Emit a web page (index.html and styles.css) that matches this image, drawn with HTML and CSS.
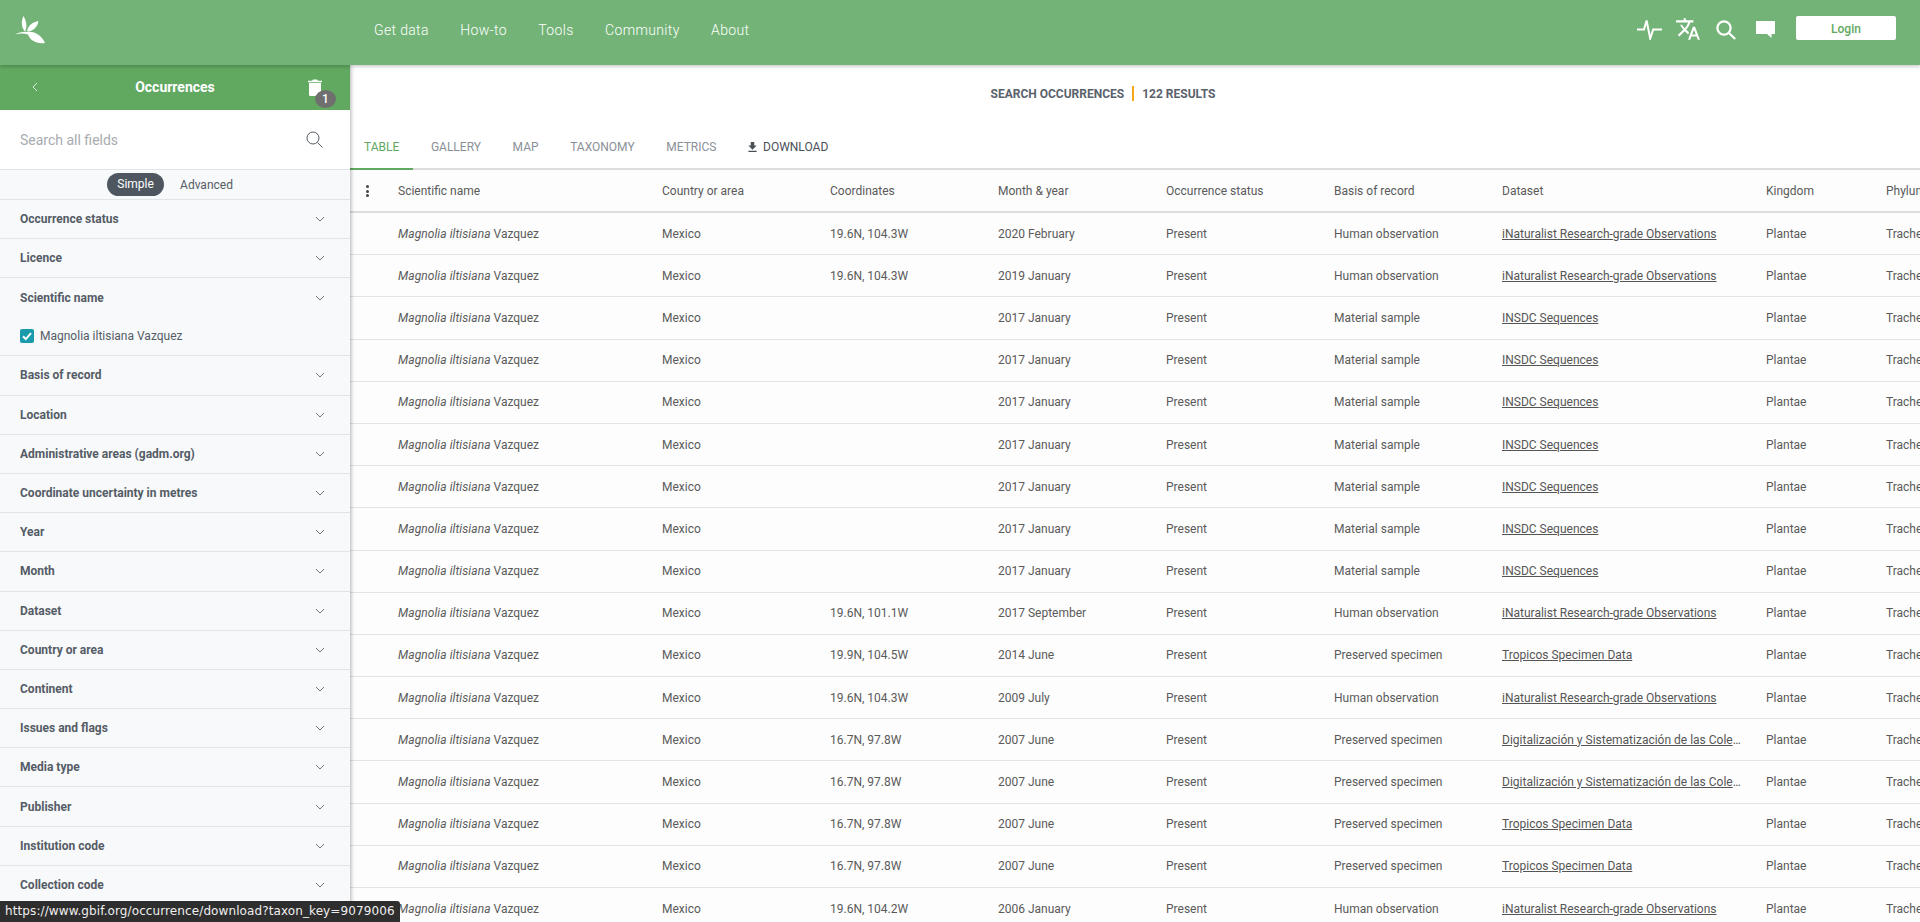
FILE: index.html
```html
<!DOCTYPE html>
<html lang="en">
<head>
<meta charset="utf-8">
<title>Occurrences</title>
<link rel="stylesheet" href="styles.css">
</head>
<body>
<header class="topbar">
  <svg class="logo" viewBox="15 16 31 28" aria-label="GBIF"><path d="M23.500 16C21 21 21 27 25 31.500 27.500 27 26.500 21 23.500 16Z"/><path d="M38.500 21C33 22 28 25 27 31.500 33 31.500 37.500 27 38.500 21Z"/><path d="M15 34.500C19 32.500 23 31.500 27 32 35 31 41 35 45 43 38 44 30.500 41.500 28 34.500 24 33.200 20 33.200 15 34.500Z"/></svg>
  <nav class="mainnav"><a>Get data</a><a>How-to</a><a>Tools</a><a>Community</a><a>About</a></nav>
  <div class="actions">
    <svg class="ic ic-pulse" viewBox="0 0 25 21"><path d="M0 10.500h7l2.600-9 3.600 18 3-9h9"/></svg>
    <svg class="ic-fill ic-translate" viewBox="0 0 24 24"><path d="M12.870 15.070l-2.540-2.510.03-.03c1.740-1.940 2.980-4.170 3.710-6.530H17V4h-7V2H8v2H1v1.990h11.170C11.500 7.920 10.440 9.750 9 11.350 8.070 10.320 7.300 9.190 6.690 8h-2c.73 1.630 1.730 3.170 2.980 4.560l-5.090 5.020L4 19l5-5 3.110 3.110.76-2.040zM18.500 10h-2L12 22h2l1.120-3h4.750L21 22h2l-4.500-12zm-2.620 7l1.620-4.330L19.120 17h-3.240z"/></svg>
    <svg class="ic ic-search" viewBox="0 0 20 20"><circle cx="8" cy="8" r="6.600"/><path d="M13 13l6.200 6"/></svg>
    <svg class="ic-fill ic-chat" viewBox="0 0 19 18"><path d="M0 1h19v13h-3.500v4L11 14H0z"/></svg>
    <button class="login">Login</button>
  </div>
</header>
<div class="layout">
  <aside class="sidebar">
    <div class="side-head">
      <svg class="back" viewBox="0 0 6 10"><path d="M5 1L1 5l4 4"/></svg>
      <span class="side-title">Occurrences</span>
      <span class="trash">
        <svg viewBox="0 0 14 17"><path d="M1 4h12v11.400c0 .9-.7 1.600-1.600 1.600H2.600C1.700 17 1 16.300 1 15.400zM0 1.800h4L5 .6h4l1 1.200h4V3.300H0z"/></svg>
        <b class="badge">1</b>
      </span>
    </div>
    <div class="side-search">
      <span class="placeholder">Search all fields</span>
      <svg class="search-ic" viewBox="0 0 17 17"><circle cx="7" cy="7" r="6"/><path d="M11.500 11.500l5 5"/></svg>
    </div>
    <div class="toggle"><span class="pill">Simple</span><span class="adv">Advanced</span></div>
    <div class="filter"><span>Occurrence status</span><svg viewBox="0 0 10 6"><path d="M1 1l4 4 4-4"/></svg></div>
    <div class="filter"><span>Licence</span><svg viewBox="0 0 10 6"><path d="M1 1l4 4 4-4"/></svg></div>
    <div class="filter open">
      <div class="filter-top"><span>Scientific name</span><svg viewBox="0 0 10 6"><path d="M1 1l4 4 4-4"/></svg></div>
      <div class="check"><i class="box"><svg viewBox="0 0 14 14"><path d="M3 7.300l2.800 2.800L11 4.200"/></svg></i>Magnolia iltisiana Vazquez</div>
    </div>
    <div class="filter"><span>Basis of record</span><svg viewBox="0 0 10 6"><path d="M1 1l4 4 4-4"/></svg></div>
    <div class="filter"><span>Location</span><svg viewBox="0 0 10 6"><path d="M1 1l4 4 4-4"/></svg></div>
    <div class="filter"><span>Administrative areas (gadm.org)</span><svg viewBox="0 0 10 6"><path d="M1 1l4 4 4-4"/></svg></div>
    <div class="filter"><span>Coordinate uncertainty in metres</span><svg viewBox="0 0 10 6"><path d="M1 1l4 4 4-4"/></svg></div>
    <div class="filter"><span>Year</span><svg viewBox="0 0 10 6"><path d="M1 1l4 4 4-4"/></svg></div>
    <div class="filter"><span>Month</span><svg viewBox="0 0 10 6"><path d="M1 1l4 4 4-4"/></svg></div>
    <div class="filter"><span>Dataset</span><svg viewBox="0 0 10 6"><path d="M1 1l4 4 4-4"/></svg></div>
    <div class="filter"><span>Country or area</span><svg viewBox="0 0 10 6"><path d="M1 1l4 4 4-4"/></svg></div>
    <div class="filter"><span>Continent</span><svg viewBox="0 0 10 6"><path d="M1 1l4 4 4-4"/></svg></div>
    <div class="filter"><span>Issues and flags</span><svg viewBox="0 0 10 6"><path d="M1 1l4 4 4-4"/></svg></div>
    <div class="filter"><span>Media type</span><svg viewBox="0 0 10 6"><path d="M1 1l4 4 4-4"/></svg></div>
    <div class="filter"><span>Publisher</span><svg viewBox="0 0 10 6"><path d="M1 1l4 4 4-4"/></svg></div>
    <div class="filter"><span>Institution code</span><svg viewBox="0 0 10 6"><path d="M1 1l4 4 4-4"/></svg></div>
    <div class="filter"><span>Collection code</span><svg viewBox="0 0 10 6"><path d="M1 1l4 4 4-4"/></svg></div>
  </aside>
  <main class="content">
    <div class="summary"><b>SEARCH OCCURRENCES</b><i class="sep"></i><b>122 RESULTS</b></div>
    <div class="tabs">
      <a class="tab active">TABLE</a><a class="tab">GALLERY</a><a class="tab">MAP</a><a class="tab">TAXONOMY</a><a class="tab">METRICS</a>
      <a class="tab dl"><svg viewBox="5 3 14 17"><path d="M19 9h-4V3H9v6H5l7 7 7-7zM5 18v2h14v-2H5z"/></svg>DOWNLOAD</a>
    </div>
    <div class="table">
      <div class="row head"><span class="dots"><i></i><i></i><i></i></span><span>Scientific name</span><span>Country or area</span><span>Coordinates</span><span>Month &amp; year</span><span>Occurrence status</span><span>Basis of record</span><span>Dataset</span><span>Kingdom</span><span>Phylum</span></div>
      <div class="row"><span></span><span><em>Magnolia iltisiana</em> Vazquez</span><span>Mexico</span><span>19.6N, 104.3W</span><span>2020 February</span><span>Present</span><span>Human observation</span><span><a>iNaturalist Research-grade Observations</a></span><span>Plantae</span><span>Tracheophyta</span></div>
      <div class="row"><span></span><span><em>Magnolia iltisiana</em> Vazquez</span><span>Mexico</span><span>19.6N, 104.3W</span><span>2019 January</span><span>Present</span><span>Human observation</span><span><a>iNaturalist Research-grade Observations</a></span><span>Plantae</span><span>Tracheophyta</span></div>
      <div class="row"><span></span><span><em>Magnolia iltisiana</em> Vazquez</span><span>Mexico</span><span></span><span>2017 January</span><span>Present</span><span>Material sample</span><span><a>INSDC Sequences</a></span><span>Plantae</span><span>Tracheophyta</span></div>
      <div class="row"><span></span><span><em>Magnolia iltisiana</em> Vazquez</span><span>Mexico</span><span></span><span>2017 January</span><span>Present</span><span>Material sample</span><span><a>INSDC Sequences</a></span><span>Plantae</span><span>Tracheophyta</span></div>
      <div class="row"><span></span><span><em>Magnolia iltisiana</em> Vazquez</span><span>Mexico</span><span></span><span>2017 January</span><span>Present</span><span>Material sample</span><span><a>INSDC Sequences</a></span><span>Plantae</span><span>Tracheophyta</span></div>
      <div class="row"><span></span><span><em>Magnolia iltisiana</em> Vazquez</span><span>Mexico</span><span></span><span>2017 January</span><span>Present</span><span>Material sample</span><span><a>INSDC Sequences</a></span><span>Plantae</span><span>Tracheophyta</span></div>
      <div class="row"><span></span><span><em>Magnolia iltisiana</em> Vazquez</span><span>Mexico</span><span></span><span>2017 January</span><span>Present</span><span>Material sample</span><span><a>INSDC Sequences</a></span><span>Plantae</span><span>Tracheophyta</span></div>
      <div class="row"><span></span><span><em>Magnolia iltisiana</em> Vazquez</span><span>Mexico</span><span></span><span>2017 January</span><span>Present</span><span>Material sample</span><span><a>INSDC Sequences</a></span><span>Plantae</span><span>Tracheophyta</span></div>
      <div class="row"><span></span><span><em>Magnolia iltisiana</em> Vazquez</span><span>Mexico</span><span></span><span>2017 January</span><span>Present</span><span>Material sample</span><span><a>INSDC Sequences</a></span><span>Plantae</span><span>Tracheophyta</span></div>
      <div class="row"><span></span><span><em>Magnolia iltisiana</em> Vazquez</span><span>Mexico</span><span>19.6N, 101.1W</span><span>2017 September</span><span>Present</span><span>Human observation</span><span><a>iNaturalist Research-grade Observations</a></span><span>Plantae</span><span>Tracheophyta</span></div>
      <div class="row"><span></span><span><em>Magnolia iltisiana</em> Vazquez</span><span>Mexico</span><span>19.9N, 104.5W</span><span>2014 June</span><span>Present</span><span>Preserved specimen</span><span><a>Tropicos Specimen Data</a></span><span>Plantae</span><span>Tracheophyta</span></div>
      <div class="row"><span></span><span><em>Magnolia iltisiana</em> Vazquez</span><span>Mexico</span><span>19.6N, 104.3W</span><span>2009 July</span><span>Present</span><span>Human observation</span><span><a>iNaturalist Research-grade Observations</a></span><span>Plantae</span><span>Tracheophyta</span></div>
      <div class="row"><span></span><span><em>Magnolia iltisiana</em> Vazquez</span><span>Mexico</span><span>16.7N, 97.8W</span><span>2007 June</span><span>Present</span><span>Preserved specimen</span><span class="clip"><a>Digitalización y Sistematización de las Colecciones Biológicas</a></span><span>Plantae</span><span>Tracheophyta</span></div>
      <div class="row"><span></span><span><em>Magnolia iltisiana</em> Vazquez</span><span>Mexico</span><span>16.7N, 97.8W</span><span>2007 June</span><span>Present</span><span>Preserved specimen</span><span class="clip"><a>Digitalización y Sistematización de las Colecciones Biológicas</a></span><span>Plantae</span><span>Tracheophyta</span></div>
      <div class="row"><span></span><span><em>Magnolia iltisiana</em> Vazquez</span><span>Mexico</span><span>16.7N, 97.8W</span><span>2007 June</span><span>Present</span><span>Preserved specimen</span><span><a>Tropicos Specimen Data</a></span><span>Plantae</span><span>Tracheophyta</span></div>
      <div class="row"><span></span><span><em>Magnolia iltisiana</em> Vazquez</span><span>Mexico</span><span>16.7N, 97.8W</span><span>2007 June</span><span>Present</span><span>Preserved specimen</span><span><a>Tropicos Specimen Data</a></span><span>Plantae</span><span>Tracheophyta</span></div>
      <div class="row"><span></span><span><em>Magnolia iltisiana</em> Vazquez</span><span>Mexico</span><span>19.6N, 104.2W</span><span>2006 January</span><span>Present</span><span>Human observation</span><span><a>iNaturalist Research-grade Observations</a></span><span>Plantae</span><span>Tracheophyta</span></div>
    </div>
  </main>
</div>
<div class="status">https://www.gbif.org/occurrence/download?taxon_key=9079006</div>
</body>
</html>
```
FILE: styles.css
```css
* { box-sizing: border-box; }
html, body { margin: 0; height: 100%; overflow: hidden; }
body { font-family: Roboto, "Liberation Sans", sans-serif; font-size: 12px; color: #555; background: #fff; }

.topbar { height: 65px; background: #73b377; display: flex; align-items: flex-start; position: relative; z-index: 3; box-shadow: 0 2px 3px rgba(0,0,0,.18); }
.logo { width: 31px; height: 28px; margin: 16px 0 0 15px; fill: #fff; flex: none; }
.mainnav { display: flex; gap: 31.4px; margin: 21px 0 0 328px; font-size: 14px; font-weight: 300; letter-spacing: .35px; line-height: 18px; color: #fff; }
.actions { margin-left: auto; display: flex; align-items: flex-start; padding: 16px 24px 0 0; }
.ic { fill: none; stroke: #fff; stroke-width: 2; }
.ic-fill { fill: #fff; }
.ic-pulse { width: 25px; height: 21px; margin: 3px 13px 0 0; }
.ic-translate { width: 26px; height: 26px; margin: 0 15px 0 0; }
.ic-search { width: 20px; height: 20px; margin: 4px 20px 0 0; stroke-width: 2.2; }
.ic-chat { width: 19px; height: 18px; margin: 4px 21px 0 0; }
.login { width: 100px; height: 24px; border: 0; border-radius: 2px; background: #fff; color: #61a861; font: 500 12px/26px Roboto, sans-serif; padding: 0; }

.layout { display: flex; height: calc(100vh - 65px); }
.sidebar { width: 350px; flex: none; background: #f7f9fa; position: relative; z-index: 2; box-shadow: 1px 0 4px rgba(0,0,0,.3); overflow: hidden; }
.side-head { height: 45px; padding-bottom: 2px; background: #61a861; color: #fff; display: flex; align-items: center; justify-content: center; position: relative; }
.side-title { font-size: 14px; font-weight: 700; }
.back { position: absolute; left: 32px; top: 17px; width: 6px; height: 10px; fill: none; stroke: #d9ecd9; stroke-width: 1; }
.trash { position: absolute; left: 308px; top: 14px; width: 14px; height: 17px; }
.trash svg { display: block; width: 14px; height: 17px; fill: #fff; }
.badge { position: absolute; left: 7px; top: 11px; width: 21px; height: 18px; border-radius: 50%; background: #6f6f6f; color: #fff; font-size: 12px; font-weight: 500; line-height: 18px; text-align: center; }
.side-search { height: 60px; background: #fff; display: flex; align-items: center; justify-content: space-between; padding: 0 27px 0 20px; border-bottom: 1px solid #dfe5e8; }
.placeholder { font-size: 14px; color: #a8abb0; }
.search-ic { width: 17px; height: 17px; fill: none; stroke: #555c66; stroke-width: 1; }
.toggle { height: 30px; display: flex; align-items: center; justify-content: center; gap: 16px; border-bottom: 1px solid #dfe5e8; padding-right: 10px; }
.pill { width: 57px; height: 23px; border-radius: 12px; background: #4e5660; color: #fff; text-align: center; line-height: 23px; }
.adv { color: #555c66; }
.filter { height: 39.2px; border-bottom: 1px solid #dfe5e8; display: flex; align-items: center; justify-content: space-between; padding: 0 25px 0 20px; font-weight: 700; color: #555c66; }
.filter svg { width: 10px; height: 6px; fill: none; stroke: #6d747c; stroke-width: 1; flex: none; }
.filter.open { height: 78px; display: block; padding: 0; }
.filter-top { height: 39px; display: flex; align-items: center; justify-content: space-between; padding: 0 25px 0 20px; }
.check { display: flex; align-items: center; font-weight: 400; padding-left: 20px; margin-top: 1px; height: 36px; }
.box { width: 14px; height: 14px; border-radius: 2px; background: #1a9bab; margin-right: 6px; display: block; }
.box svg { display: block; width: 14px; height: 14px; fill: none; stroke: #fff; stroke-width: 2; }

.content { flex: 1; min-width: 0; overflow: hidden; background: #fff; }
.summary { height: 58px; padding: 0 64px 1px 0; display: flex; align-items: center; justify-content: center; gap: 8px; color: #5a626c; }
.summary b { font-weight: 700; font-size: 12px; }
.sep { width: 2px; height: 15px; background: #f5a81c; }
.tabs { height: 47px; display: flex; gap: 3.6px; border-bottom: 2px solid #ddd; align-items: flex-start; }
.tab { padding: 2px 14px 0; display: flex; align-items: center; color: #8a9097; height: 45px; }
.tab.active { color: #61a861; border-bottom: 2px solid #61a861; height: 47px; }
.tab.dl { color: #4a5058; padding-left: 14px; }
.tab.dl svg { width: 9px; height: 10px; margin-right: 6px; fill: #4a5058; }

.table { background: #fdfdfd; }
.row { display: grid; grid-template-columns: 48px 264px 168px 168px 168px 168px 168px 264px 120px 168px; height: 42.2px; align-items: center; border-bottom: 1px solid #e4e4e4; width: 1700px; color: #5a5a5a; }
.row > span { white-space: nowrap; min-width: 0; }
.row em { letter-spacing: .07px; }
.row.head { height: 43px; padding-top: 1px; border-bottom: 2px solid #ddd; }
.row a { color: #555; text-decoration: underline; }
.clip { padding-right: 24px; }
.clip a { display: block; overflow: hidden; text-overflow: ellipsis; }
.dots { display: flex; flex-direction: column; align-items: center; gap: 1.5px; padding-right: 14px; }
.dots i { width: 3px; height: 3px; border-radius: 50%; background: #444; display: block; }

.status { position: fixed; left: 0; bottom: 0; z-index: 5; width: 400px; height: 21px; padding: 0 5px; background: #2e2e2e; color: #eee; font: 12px/21px "DejaVu Sans", sans-serif; letter-spacing: .1px; white-space: nowrap; border-top-right-radius: 3px; }
```
